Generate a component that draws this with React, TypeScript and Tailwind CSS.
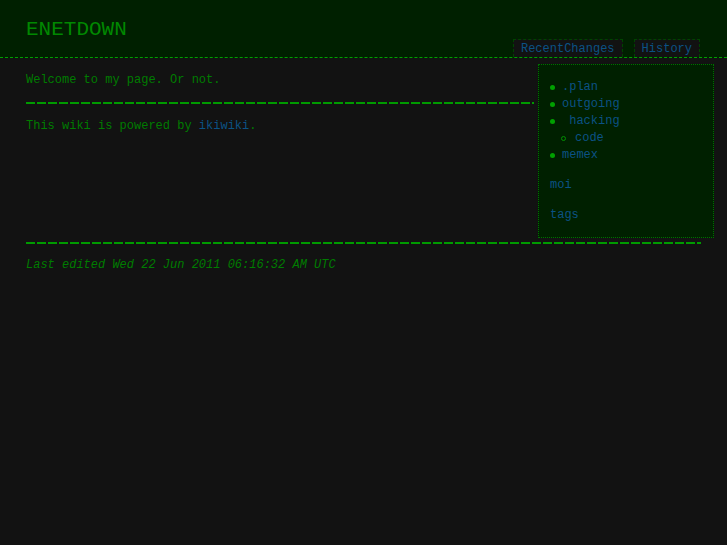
import React from 'react';

const mono = { fontFamily: '"Liberation Mono", "Courier New", monospace' };

const tabs = ['RecentChanges', 'History'];

const Bullet: React.FC<{ hollow?: boolean }> = ({ hollow }) => (
  <span
    className={
      hollow
        ? 'inline-block w-[5px] h-[5px] rounded-full border border-[#009000] mr-[9px]'
        : 'inline-block w-[5px] h-[5px] rounded-full bg-[#00a000] mr-[7px]'
    }
  />
);

export default function App() {
  return (
    <div className="min-h-[545px] bg-[#121212] text-[12px] leading-[17px] text-[#007c00] font-['Liberation_Mono',monospace]">
      <div className="h-[58px] bg-[#002000] border-b border-dashed border-[#00a000] px-[26px] flex justify-between">
        <h1 className="pt-[18px] text-[21px] leading-[24px] text-[#008800] font-normal">ENETDOWN</h1>
        <div className="flex items-end gap-[11px] pr-[1px]">
          {tabs.map((t) => (
            <a
              key={t}
              className="h-[18px] px-[7px] pt-[1px] bg-[#121212] border border-b-0 border-dashed border-[#004400] text-[#0b5285] leading-[17px]"
            >
              {t}
            </a>
          ))}
        </div>
      </div>

      <div className="px-[26px]">
        <div className="flex">
          <div className="w-[508px] pt-[14px]">
            <p>Welcome to my page. Or not.</p>
            <div className="mt-[13px] h-[2px] bg-[repeating-linear-gradient(90deg,#009a00_0_9px,transparent_9px_11px)]" />
            <p className="mt-[14px]">
              This wiki is powered by <a className="text-[#0b5285]">ikiwiki</a>.
            </p>
          </div>
          <div className="ml-[4px] mt-[6px] w-[176px] h-[174px] mr-[-13px] bg-[#002000] border border-dotted border-[#007000] pl-[11px] pt-[14px] text-[#0b5285]">
            <ul>
              <li className="flex items-center"><Bullet /> .plan</li>
              <li className="flex items-center"><Bullet />outgoing</li>
              <li className="flex items-center"><Bullet />{'\u00a0hacking'}</li>
              <li className="flex items-center pl-[11px]"><Bullet hollow />code</li>
              <li className="flex items-center"><Bullet />memex</li>
            </ul>
            <p className="mt-[13px]">moi</p>
            <p className="mt-[13px]">tags</p>
          </div>
        </div>
        <div className="mt-[4px] h-[2px] bg-[repeating-linear-gradient(90deg,#009a00_0_9px,transparent_9px_11px)]" />
        <p className="mt-[13px] italic" style={mono}>Last edited Wed 22 Jun 2011 06:16:32 AM UTC</p>
      </div>
    </div>
  );
}
